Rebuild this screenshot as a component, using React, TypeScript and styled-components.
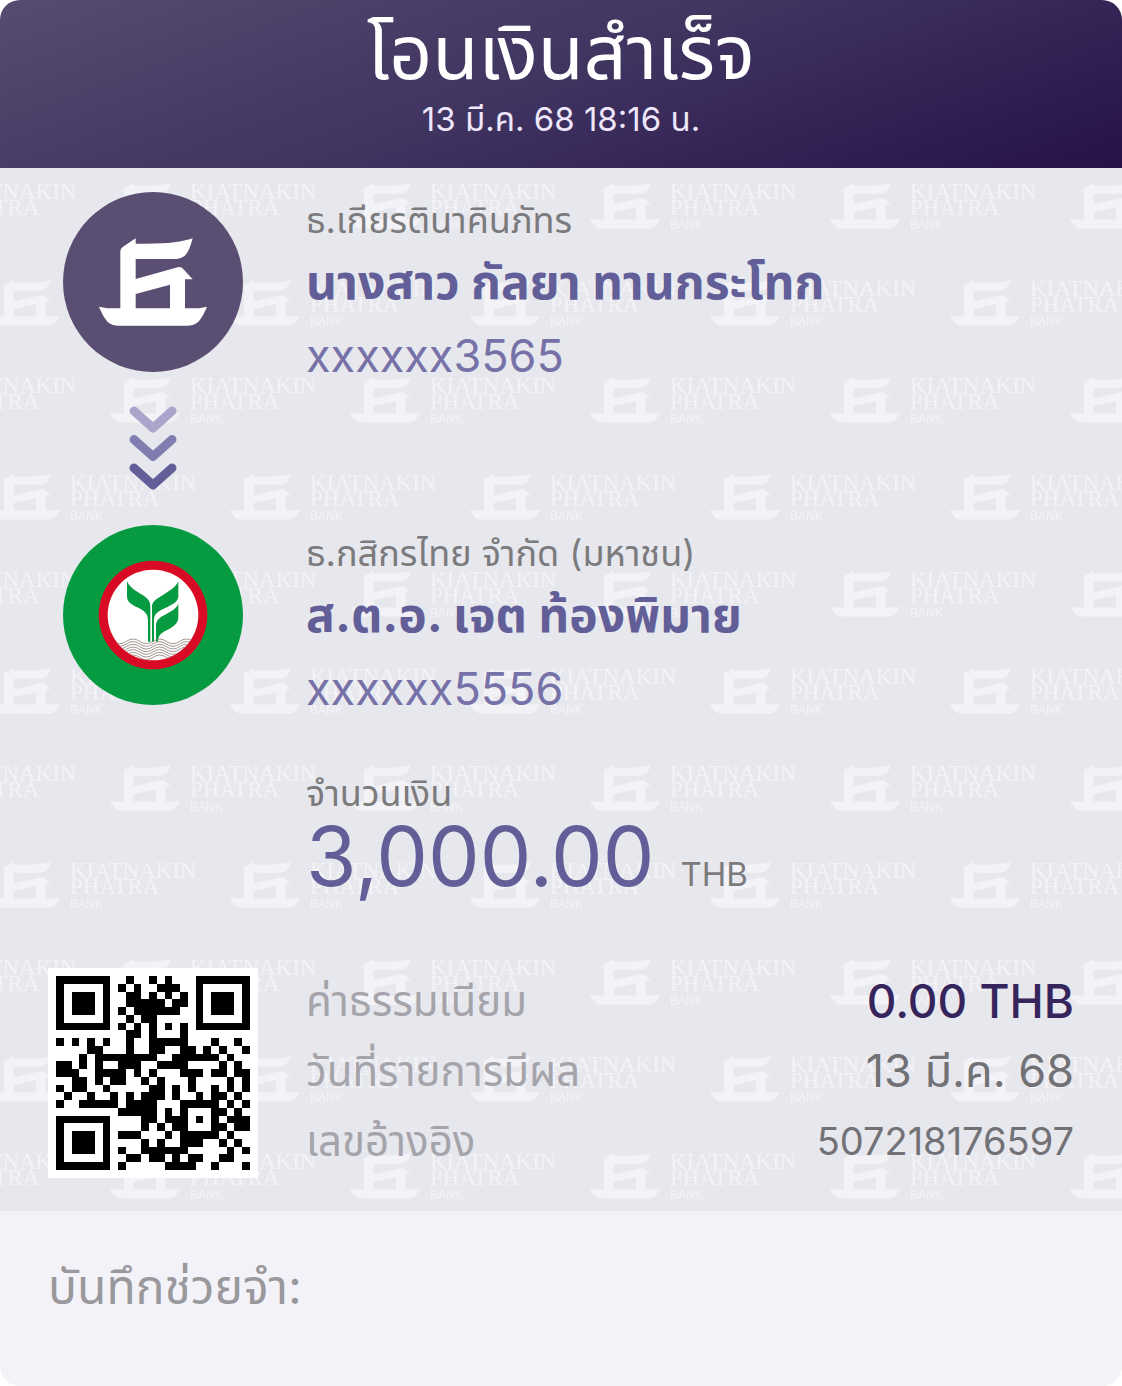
import React from "react";
import styled, { createGlobalStyle } from "styled-components";

const GlobalStyle = createGlobalStyle`
  *, *::before, *::after { box-sizing: border-box; }
  body {
    margin: 0;
    background: #ffffff;
    font-family: Inter, "Noto Sans Thai", "Noto Sans", "Liberation Sans", sans-serif;
  }
  h1, p, dl, dt, dd { margin: 0; font-weight: 400; }
`;

const Slip = styled.main`
  display: flex;
  flex-direction: column;
  min-height: 100vh;
  overflow: hidden;
  border-radius: 20px;
  background: #f3f2f8;
`;

const Header = styled.header`
  display: flex;
  flex-direction: column;
  align-items: center;
  padding: 10px 24px 24px;
  background: linear-gradient(160deg, #564b70 0%, #3f3360 50%, #261148 100%);
  color: #ffffff;
`;

const Title = styled.h1`
  font-size: 75px;
  line-height: 84px;
`;

const Timestamp = styled.p`
  font-size: 33px;
  line-height: 50px;
  color: #eee6fa;
`;

const Body = styled.section`
  position: relative;
  padding: 24px 48px 33px;
  background: #e7e7ee;
`;

const WatermarkLayer = styled.svg`
  position: absolute;
  inset: 0;
  width: 100%;
  height: 100%;
`;

const Content = styled.div`
  position: relative;
  display: grid;
  grid-template-columns: 210px minmax(0, 1fr);
  column-gap: 48px;
`;

const Rail = styled.div`
  display: flex;
  flex-direction: column;
  align-items: center;
  gap: 34px;
`;

const Avatar = styled.div<{ $color: string }>`
  display: flex;
  align-items: center;
  justify-content: center;
  width: 180px;
  height: 180px;
  border-radius: 50%;
  background: ${(p) => p.$color};
`;

const Parties = styled.div`
  display: flex;
  flex-direction: column;
  justify-content: space-between;
  gap: 129px;
`;

const Party = styled.div`
  display: flex;
  flex-direction: column;
`;

const Caption = styled.p`
  font-size: 36px;
  line-height: 56px;
  color: #7b7b7d;
`;

const PartyName = styled.p`
  font-size: 48px;
  line-height: 68px;
  font-weight: 700;
  color: #625e98;
`;

const Account = styled.p`
  font-size: 45px;
  line-height: 80px;
  color: #7672a8;
`;

const AmountBlock = styled.div`
  grid-column: 2;
  padding: 36px 0 72px;
`;

const AmountRow = styled.p`
  display: flex;
  align-items: baseline;
  gap: 26px;
  line-height: 72px;
`;

const Amount = styled.span`
  font-size: 82px;
  color: #625e98;
`;

const Currency = styled.span`
  font-size: 33px;
  line-height: 44px;
  color: #7b7b7d;
`;

const QrFrame = styled.div`
  width: 210px;
  height: 210px;
  padding: 8px;
  background: #ffffff;
`;

const Details = styled.dl`
  display: flex;
  flex-direction: column;
`;

const DetailRow = styled.div`
  display: flex;
  align-items: flex-start;
  justify-content: space-between;
  height: 70px;
  line-height: 66px;
`;

const DetailLabel = styled.dt`
  font-size: 42px;
  color: #a5a4aa;
`;

const DetailValue = styled.dd<{ $size: number; $strong?: boolean }>`
  font-size: ${(p) => p.$size}px;
  font-weight: ${(p) => (p.$strong ? 500 : 400)};
  color: ${(p) => (p.$strong ? "#35255c" : "#727276")};
`;

const Memo = styled.footer`
  flex: 1;
  padding: 44px 48px;
  font-size: 48px;
  line-height: 64px;
  color: #99989c;
`;

const SHIP =
  "M110 0V16C200 18 245 12 281 0C270 40 262 62 225 62H110V122L236 87Q246 84 252 91L281 123H258V210H300L324 205C305 250 293 262 262 262H62C31 262 19 250 0 205L24 210H64V40Q64 30 72 25ZM110 167V210H213V139Z";

function Watermark() {
  return (
    <WatermarkLayer aria-hidden="true">
      <defs>
        <g id="mark" fill="#ffffff" fillOpacity="0.5">
          <path d={SHIP} fillRule="evenodd" transform="scale(0.216 0.174)" />
          <g fontFamily="Liberation Serif, serif" fontSize="23">
            <text x="80" y="16">KIATNAKIN</text>
            <text x="80" y="32">PHATRA</text>
          </g>
          <text x="80" y="46" fontFamily="Liberation Sans, sans-serif" fontSize="12">
            BANK
          </text>
        </g>
        <pattern id="marks" width="240" height="194" patternUnits="userSpaceOnUse">
          <use href="#mark" x="110" y="15" />
          <use href="#mark" x="-130" y="15" />
          <use href="#mark" x="-10" y="112" />
          <use href="#mark" x="230" y="112" />
        </pattern>
      </defs>
      <rect width="100%" height="100%" fill="url(#marks)" />
    </WatermarkLayer>
  );
}

function ShipLogo() {
  return (
    <svg width="108" height="88" viewBox="0 0 324 262" role="img" aria-label="Kiatnakin Phatra Bank">
      <path d={SHIP} fill="#ffffff" fillRule="evenodd" />
    </svg>
  );
}

function LeafLogo() {
  const waves = [0, 1, 2, 3, 4, 5, 6];
  return (
    <svg width="110" height="110" viewBox="0 0 330 330" role="img" aria-label="Kasikornbank">
      <defs>
        <clipPath id="disc">
          <circle cx="165" cy="165" r="136" />
        </clipPath>
      </defs>
      <circle cx="165" cy="165" r="163" fill="#d90a23" />
      <circle cx="165" cy="165" r="136" fill="#ffffff" />
      <g fill="#069b41">
        <path d="M87 63C93 82 116 94 135 106C150 116 157 124 157 140V245H150V182C150 160 138 152 118 142C98 132 87 126 87 108Z" />
        <path d="M241 63C235 82 212 94 190 108C170 120 162 126 162 142V245H168V182C168 162 178 156 200 145C224 133 241 126 241 108Z" />
        <path d="M241 130C237 146 220 154 200 165C182 174 174 182 174 198V245H180C181 226 188 220 206 211C228 200 241 190 241 172Z" />
      </g>
      <g clipPath="url(#disc)" fill="none" stroke="#8c7a74" strokeWidth="2.4">
        {waves.map((i) => (
          <path
            key={i}
            d={`M5 ${244 + i * 8}q20 -14 40 0t40 0t40 0t40 0t40 0t40 0t40 0t40 0`}
          />
        ))}
      </g>
    </svg>
  );
}

function Chevrons() {
  const colors = ["#aaa5cb", "#827db1", "#625e98"];
  return (
    <svg width="48" height="85" viewBox="0 0 48 85" aria-hidden="true">
      {colors.map((color, i) => (
        <path
          key={color}
          d={`M5 ${5 + i * 28.5}L24 ${22 + i * 28.5}L43 ${5 + i * 28.5}`}
          fill="none"
          stroke={color}
          strokeWidth="9"
          strokeLinecap="round"
          strokeLinejoin="round"
        />
      ))}
    </svg>
  );
}

const QR_ROWS = [
  "XXXXXXX..X..X.X...XXXXXXX",
  "X.....X.X.X..XXX..X.....X",
  "X.XXX.X..XX.X.X.X.X.XXX.X",
  "X.XXX.X..XXXXX.XX.X.XXX.X",
  "X.XXX.X.X.XXXXXX..X.XXX.X",
  "X.....X..X.XX.....X.....X",
  "XXXXXXX.X.X.X.X.X.XXXXXXX",
  ".........XX.X...X........",
  "X.X.X.X..X..XXXXX...X..X.",
  "....XX...X..XX..XX.X.X..X",
  "...X.XXXXXXXX..XXXXXX.X..",
  "XX.X.X..XXX..XXXX....X.X.",
  "XXX..XXXX.X.X...XXX.XX.XX",
  "..XX.X.XX..X.X...X....X.X",
  "X.XX..X.....XX.X.X..X.X.X",
  ".X..X..X.X.XXX.X..X.XX.X.",
  "X..XXXXX.XXXX...XXXXX.X.X",
  "........XXXXX.X.X...XX.X.",
  "XXXXXXX....XX.XXX.X.X.XXX",
  "X.....X....X.X.XX...XX.XX",
  "X.XXX.X.XXX...X.XXXXX.X..",
  "X.XXX.X....X.X..XXX..X.X.",
  "X.XXX.X.X..XXXXXX.....X.X",
  "X.....X..XX.XX.X.XX..XX..",
  "XXXXXXX.X.....XXXX..X...X",
];

function QrCode() {
  const path = QR_ROWS.map((row, y) =>
    [...row].map((cell, x) => (cell === "X" ? `M${x} ${y}h1v1h-1z` : "")).join("")
  ).join("");
  return (
    <svg width="194" height="194" viewBox="0 0 25 25" shapeRendering="crispEdges" role="img" aria-label="QR">
      <path d={path} fill="#000000" />
    </svg>
  );
}

const details = [
  { label: "ค่าธรรมเนียม", value: "0.00 THB", size: 46, strong: true },
  { label: "วันที่รายการมีผล", value: "13 มี.ค. 68", size: 45 },
  { label: "เลขอ้างอิง", value: "507218176597", size: 38 },
];

export default function App() {
  return (
    <>
      <GlobalStyle />
      <Slip>
        <Header>
          <Title>โอนเงินสำเร็จ</Title>
          <Timestamp>13 มี.ค. 68 18:16 น.</Timestamp>
        </Header>
        <Body>
          <Watermark />
          <Content>
            <Rail>
              <Avatar $color="#5a4e72">
                <ShipLogo />
              </Avatar>
              <Chevrons />
              <Avatar $color="#069b41">
                <LeafLogo />
              </Avatar>
            </Rail>
            <Parties>
              <Party>
                <Caption>ธ.เกียรตินาคินภัทร</Caption>
                <PartyName>นางสาว กัลยา ทานกระโทก</PartyName>
                <Account>xxxxxx3565</Account>
              </Party>
              <Party>
                <Caption>ธ.กสิกรไทย จำกัด (มหาชน)</Caption>
                <PartyName>ส.ต.อ. เจต ท้องพิมาย</PartyName>
                <Account>xxxxxx5556</Account>
              </Party>
            </Parties>
            <AmountBlock>
              <Caption>จำนวนเงิน</Caption>
              <AmountRow>
                <Amount>3,000.00</Amount>
                <Currency>THB</Currency>
              </AmountRow>
            </AmountBlock>
            <QrFrame>
              <QrCode />
            </QrFrame>
            <Details>
              {details.map((d) => (
                <DetailRow key={d.label}>
                  <DetailLabel>{d.label}</DetailLabel>
                  <DetailValue $size={d.size} $strong={d.strong}>
                    {d.value}
                  </DetailValue>
                </DetailRow>
              ))}
            </Details>
          </Content>
        </Body>
        <Memo>บันทึกช่วยจำ:</Memo>
      </Slip>
    </>
  );
}
